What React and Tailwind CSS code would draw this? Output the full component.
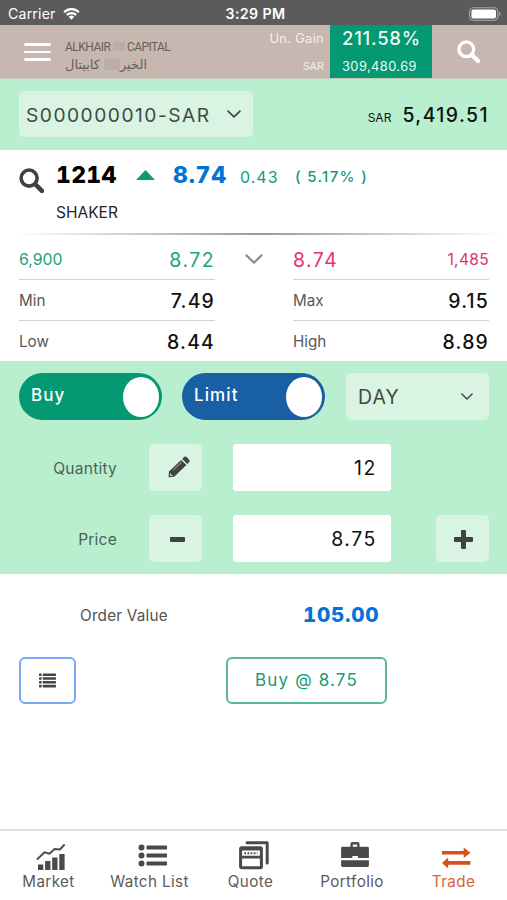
const QUOTES_LEFT = [
  { label: 'Min', value: '7.49' },
  { label: 'Low', value: '8.44' },
]

const QUOTES_RIGHT = [
  { label: 'Max', value: '9.15' },
  { label: 'High', value: '8.89' },
]

function SearchIcon({ className }) {
  return (
    <svg className={className} viewBox="0 0 24 24" fill="none" stroke="currentColor">
      <circle cx="9.7" cy="9.7" r="7.7" strokeWidth="3.4" />
      <path d="M15.6 15.6L22 22" strokeWidth="4.4" strokeLinecap="round" />
    </svg>
  )
}

function ChevronIcon({ className }) {
  return (
    <svg className={className} viewBox="0 0 16 9" fill="none" stroke="currentColor">
      <path d="M1.2 1.2L8 7.8L14.8 1.2" strokeWidth="2" strokeLinecap="round" strokeLinejoin="round" />
    </svg>
  )
}

function StatusBar() {
  return (
    <div className="h-[25px] shrink-0 bg-[#5b5b5b] text-white grid grid-cols-3 items-center pt-[3px] pl-[8px] pr-[6px]">
      <div className="flex items-center gap-[7px]">
        <span className="text-[14.2px] leading-none tracking-[0.15px]">Carrier</span>
        <svg className="w-[17px] h-[12px]" viewBox="0 0 18 13" fill="none" stroke="currentColor" strokeWidth="2.4">
          <path d="M1 4.6a11.3 11.3 0 0 1 16 0" />
          <path d="M3.9 7.6a7.2 7.2 0 0 1 10.2 0" />
          <path d="M9 12.6l-3-3a4.2 4.2 0 0 1 6 0z" fill="currentColor" stroke="none" />
        </svg>
      </div>
      <span className="pl-[2px] text-center text-[14.2px] font-semibold leading-none tracking-[0.4px]">3:29 PM</span>
      <svg className="w-[32px] h-[14px] justify-self-end" viewBox="0 0 32 14">
        <rect x="0.6" y="0.8" width="28.2" height="12.4" rx="3.6" fill="none" stroke="#a8a8a8" strokeWidth="1.1" />
        <rect x="2.4" y="2.5" width="24.6" height="9" rx="2" fill="white" />
        <path d="M30.2 4.8a2.4 2.4 0 0 1 0 4.4z" fill="#a8a8a8" />
      </svg>
    </div>
  )
}

function Header() {
  return (
    <header className="h-[54px] shrink-0 bg-[#c6b8b0] flex border-b border-[#c3c7b6]">
      <button className="ml-[24px] mt-[18px] w-[27px] h-[18px] flex flex-col justify-between" aria-label="Menu">
        <span className="w-full h-[2.6px] rounded-full bg-white" />
        <span className="w-full h-[2.6px] rounded-full bg-white" />
        <span className="w-full h-[2.6px] rounded-full bg-white" />
      </button>

      <div className="ml-[14px] mt-[14px] w-[120px] text-[#6c5c58]">
        <div className="flex items-center h-[15px] font-[Roboto,sans-serif] text-[12px] leading-none">
          <span className="w-[48px] whitespace-nowrap tracking-[-0.5px]">ALKHAIR</span>
          <span className="w-[12px] h-[9px] bg-[#b9aea8]" />
          <span className="ml-[2px] whitespace-nowrap tracking-[-0.6px]">CAPITAL</span>
        </div>
        <div className="flex items-center h-[20px] font-['DejaVu_Sans',sans-serif] text-[13px] leading-none">
          <span className="w-[35px] whitespace-nowrap" dir="rtl">كابيتال</span>
          <span className="ml-[4px] w-[16px] h-[11px] bg-[#b9aea8]" />
          <span className="ml-[1px] w-[26px]" dir="rtl">الخير</span>
        </div>
      </div>

      <div className="flex-1 flex flex-col items-end pr-[6px] text-[#f4eeeb]">
        <span className="mt-[7px] text-[12.8px] leading-[14px] tracking-[0.35px]">Un. Gain</span>
        <span className="mt-[15px] text-[10.8px] leading-[11px]">SAR</span>
      </div>

      <div className="w-[102px] h-[53px] bg-[#049973] text-[#e9fbf4] flex flex-col pl-[12px]">
        <span className="mt-[3px] text-[18.5px] leading-[20px] tracking-[0.75px] font-medium">211.58%</span>
        <span className="mt-[11px] text-[12.8px] leading-[16px] tracking-[0.45px]">309,480.69</span>
      </div>

      <div className="w-[75px] pl-[25px] pt-[15px]">
        <SearchIcon className="w-[23px] h-[23px] text-white" />
      </div>
    </header>
  )
}

function AccountBar() {
  return (
    <div className="h-[71px] shrink-0 bg-[#b9efcf] flex justify-between pl-[19px] pr-[18px] pt-[12px]">
      <button className="w-[234px] h-[46px] rounded-[5px] bg-[#d9f4e2] text-[#3f4a43] flex items-center justify-between pl-[7px] pr-[12px]">
        <span className="pt-[4px] text-[19.2px] leading-none tracking-[1.5px]">S000000010-SAR</span>
        <ChevronIcon className="w-[14px] h-[8px]" />
      </button>
      <div className="flex items-baseline gap-[11px] pt-[15px] text-[#0c120e]">
        <span className="text-[12px] leading-none">SAR</span>
        <span className="text-[19.4px] leading-none tracking-[1.45px] font-medium">5,419.51</span>
      </div>
    </div>
  )
}

function Symbol() {
  return (
    <section className="h-[83px] shrink-0 pl-[19px] flex flex-col">
      <div className="flex">
        <SearchIcon className="mt-[18px] w-[25px] h-[25px] text-[#404040]" />
        <div className="ml-[12px] mt-[13px]">
          <div className="flex items-center h-[24px] leading-none">
            <span className="w-[80px] text-[23px] font-extrabold tracking-[0.3px] tabular-nums text-black">1214</span>
            <svg className="w-[19px] h-[10px]" viewBox="0 0 19 10">
              <path d="M9.5 0L19 10H0z" fill="#0c9a73" />
            </svg>
            <span className="ml-[18px] w-[67px] text-[23px] font-extrabold tracking-[0.8px] tabular-nums text-[#0473d6]">8.74</span>
            <span className="w-[55px] pt-[3px] text-[16px] tracking-[1px] text-[#129c75]">0.43</span>
            <span className="pt-[3px] text-[15px] tracking-[1.35px] font-medium whitespace-pre text-[#129c75]">( 5.17% )</span>
          </div>
          <p className="mt-[18px] text-[15.5px] leading-[16px] text-[#262626]">SHAKER</p>
        </div>
      </div>
    </section>
  )
}

function QuoteRow({ label, value }) {
  return (
    <div className="h-[41px] flex items-center justify-between border-t border-[#d2d2d2]">
      <span className="pt-[1px] text-[15.2px] leading-none text-[#585858]">{label}</span>
      <span className="pt-[3px] text-[19.4px] leading-none font-medium tracking-[1.2px] text-[#111111]">{value}</span>
    </div>
  )
}

function Quotes() {
  return (
    <section className="h-[128px] shrink-0 pl-[19px] pr-[18px]">
      <div className="-ml-[3px] -mr-[14px] h-[2px] bg-linear-to-r from-white via-[#9a9a9a] to-white" />
      <div className="grid grid-cols-[196px_1fr_196px] pt-[4px]">
        <div>
          <div className="h-[40px] pt-[1px] flex items-center justify-between leading-none text-[#1aa27b]">
            <span className="text-[15.8px]">6,900</span>
            <span className="pt-[2px] text-[19.4px] tracking-[1.5px]">8.72</span>
          </div>
          {QUOTES_LEFT.map((row) => (
            <QuoteRow key={row.label} {...row} />
          ))}
        </div>
        <div className="flex justify-center pt-[15px]">
          <ChevronIcon className="w-[18px] h-[10px] text-[#8f8f8f]" />
        </div>
        <div>
          <div className="h-[40px] pt-[1px] flex items-center justify-between leading-none text-[#e0356b]">
            <span className="pt-[2px] text-[19.4px] tracking-[1.5px]">8.74</span>
            <span className="text-[15.6px] tracking-[0.3px]">1,485</span>
          </div>
          {QUOTES_RIGHT.map((row) => (
            <QuoteRow key={row.label} {...row} />
          ))}
        </div>
      </div>
    </section>
  )
}

function Toggle({ label, className }) {
  return (
    <button
      role="switch"
      aria-checked="true"
      className={`w-[143px] h-[47px] rounded-full flex items-center justify-between pl-[12px] pr-[3px] text-white ${className}`}
    >
      <span className="pb-[3px] text-[17px] leading-none font-medium tracking-[1.1px]">{label}</span>
      <span className="w-[36px] h-[40px] rounded-[50%] bg-white" />
    </button>
  )
}

function OrderForm() {
  return (
    <section className="h-[213px] shrink-0 bg-[#b9efcf] pl-[19px] pr-[18px] pt-[12px]">
      <div className="flex">
        <Toggle label="Buy" className="bg-[#049973]" />
        <Toggle label="Limit" className="ml-[20px] bg-[#185fa3]" />
        <button className="ml-auto w-[143px] h-[47px] rounded-[5px] bg-[#d9f4e2] text-[#3f4a43] flex items-center justify-between pl-[12px] pr-[16px]">
          <span className="pt-[2px] text-[19.4px] leading-none tracking-[1.1px]">DAY</span>
          <ChevronIcon className="w-[12px] h-[7px]" />
        </button>
      </div>

      <div className="mt-[24px] flex items-center">
        <span className="w-[98px] pt-[2px] text-right text-[15.6px] leading-none tracking-[0.2px] text-[#4c6355]">Quantity</span>
        <button className="ml-[32px] w-[53px] h-[47px] rounded-[5px] bg-[#d9f4e2] flex items-center justify-center pl-[6px] pb-[2px]" aria-label="Edit quantity">
          <svg className="w-[22px] h-[22px] text-[#404340]" viewBox="0 0 22 22" fill="currentColor">
            <path d="M0.6 21.2L1 15.6L13.2 3.9L18.4 9L6.2 20.8z" />
            <path d="M14.2 2.9L16 1.1q1.3-1.1 2.6 0l2.4 2.5q1.2 1.3 0 2.6L19.3 8z" />
            <path d="M2.1 17.2L3.1 18.1 3.2 19 4.6 19.2 5.1 19.8 2.2 20z" fill="#d9f4e2" />
            <path d="M5.2 14.2L13.4 6.3" stroke="#b9c4bc" strokeWidth="0.9" />
          </svg>
        </button>
        <div className="ml-[31px] w-[158px] h-[47px] rounded-[3px] bg-white flex items-center justify-end pr-[14px]">
          <span className="pt-[2px] text-[19.4px] leading-none tracking-[1.6px] text-[#111111]">12</span>
        </div>
      </div>

      <div className="mt-[24px] flex items-center">
        <span className="w-[98px] pt-[2px] text-right text-[15.6px] leading-none tracking-[0.2px] text-[#4c6355]">Price</span>
        <button className="ml-[32px] w-[53px] h-[47px] rounded-[5px] bg-[#d9f4e2] flex items-center justify-center pl-[4px] pt-[1px]" aria-label="Decrease price">
          <span className="w-[15px] h-[5px] rounded-[1px] bg-[#404340]" />
        </button>
        <div className="ml-[31px] w-[158px] h-[47px] rounded-[3px] bg-white flex items-center justify-end pr-[14px]">
          <span className="pt-[2px] text-[19.4px] leading-none tracking-[1.6px] text-[#111111]">8.75</span>
        </div>
        <button className="ml-auto w-[53px] h-[47px] rounded-[5px] bg-[#d9f4e2] flex items-center justify-center pl-[2px] pt-[1px]" aria-label="Increase price">
          <svg className="w-[19px] h-[19px] text-[#404340]" viewBox="0 0 19 19" fill="currentColor">
            <rect x="0" y="7" width="19" height="5" rx="1" />
            <rect x="7" y="0" width="5" height="19" rx="1" />
          </svg>
        </button>
      </div>
    </section>
  )
}

function OrderSummary() {
  return (
    <section className="flex-1 px-[19px] pt-[29px]">
      <div className="flex items-center h-[24px] pl-[61px] leading-none">
        <span className="w-[223px] pt-[2px] text-[15.3px] tracking-[0.2px] text-[#525252]">Order Value</span>
        <span className="text-[20.6px] font-extrabold tracking-[0.7px] tabular-nums text-[#0473d6]">105.00</span>
      </div>
      <div className="flex mt-[30px]">
        <button className="w-[57px] h-[47px] rounded-[6px] border-2 border-[#7da6f6] flex items-center justify-center" aria-label="Orders">
          <svg className="w-[17px] h-[15px]" viewBox="0 0 18 15" fill="#454545">
            {[0, 4, 8, 12].map((y) => (
              <g key={y}>
                <rect x="0" y={y} width="2.8" height="2.8" rx="0.5" />
                <rect x="4" y={y} width="14" height="2.8" rx="0.5" />
              </g>
            ))}
          </svg>
        </button>
        <button className="ml-[150px] w-[161px] h-[47px] rounded-[6px] border-2 border-[#57b899] text-[17px] leading-none tracking-[1.15px] text-[#189c76]">
          Buy @ 8.75
        </button>
      </div>
    </section>
  )
}

function MarketIcon() {
  return (
    <svg className="w-[30px] h-[27px]" viewBox="0 0 30 27" fill="currentColor">
      <path d="M1 16.5L8.5 9.3L13.5 10.6L18.5 6L24 6.4L28.6 1.5" fill="none" stroke="currentColor" strokeWidth="1.9" />
      <path d="M2 21.5h5.3V27H2zM9.1 18h5.3v9H9.1zM16.2 14.4h5.3V27h-5.3zM23.3 11h5.3v16h-5.3z" />
    </svg>
  )
}

function WatchListIcon() {
  return (
    <svg className="w-[30px] h-[27px]" viewBox="0 0 30 27" fill="currentColor">
      {[4.5, 12.5, 20.5].map((y) => (
        <g key={y}>
          <circle cx="3.5" cy={y} r="3" />
          <rect x="8.5" y={y - 1.9} width="20.5" height="3.8" rx="0.6" />
        </g>
      ))}
    </svg>
  )
}

function QuoteIcon() {
  return (
    <svg className="w-[30px] h-[29px]" viewBox="0 0 30 29" fill="none" stroke="currentColor">
      <path d="M8 1.7H28.2V22" strokeWidth="3" strokeLinejoin="round" strokeLinecap="round" />
      <rect x="1.6" y="6.8" width="20.8" height="20" rx="1" strokeWidth="3" />
      <path d="M1.6 8h20.8M1.6 16.2h20.8" strokeWidth="2.8" />
      <path d="M5.4 12.2h13" strokeWidth="2" strokeDasharray="1.7 1.4" />
    </svg>
  )
}

function PortfolioIcon() {
  return (
    <svg className="w-[30px] h-[29px]" viewBox="0 0 30 29" fill="currentColor">
      <path d="M11.6 6V3.2q0-1 1-1h4.8q1 0 1 1V6" fill="none" stroke="currentColor" strokeWidth="2.4" />
      <path d="M2.5 5.8h25q1.4 0 1.4 1.4v9.8H18v-1.9h-5.7V17H1.1V7.2q0-1.4 1.4-1.4z" />
      <path d="M1.1 19.3h27.8v5.2q0 1.4-1.4 1.4h-25q-1.4 0-1.4-1.4z" />
    </svg>
  )
}

function TradeIcon() {
  return (
    <svg className="w-[30px] h-[22px]" viewBox="0 0 30 22" fill="currentColor">
      <path d="M1 4h21.7V0.4L29.4 5.8L22.7 11V7.6H1z" />
      <path d="M29.4 14H7.2V10.6L1 16L7.2 21.4V17.7h22.2z" />
    </svg>
  )
}

const TABS = [
  { label: 'Market', Icon: MarketIcon, pad: 'pl-[5px]' },
  { label: 'Watch List', Icon: WatchListIcon, pad: 'pl-[6px]' },
  { label: 'Quote', Icon: QuoteIcon, pad: 'pl-[7px]' },
  { label: 'Portfolio', Icon: PortfolioIcon, pad: 'pl-[6px]' },
  { label: 'Trade', Icon: TradeIcon, pad: 'pl-[5px] pb-[1px]', active: true },
]

function TabBar() {
  return (
    <nav className="h-[71px] shrink-0 border-t-2 border-[#dfdfdf] grid grid-cols-[97px_105px_97px_106px_97px]">
      {TABS.map(({ label, Icon, pad, active }) => (
        <a
          key={label}
          className={`flex flex-col items-center ${active ? 'text-[#d4501c]' : 'text-[#4a4a4a]'}`}
        >
          <span className={`h-[39px] flex items-end ${pad}`}>
            <Icon />
          </span>
          <span className="mt-[4px] text-[15.2px] leading-[16px] tracking-[0.4px] opacity-90 whitespace-nowrap">{label}</span>
        </a>
      ))}
    </nav>
  )
}

export default function App() {
  return (
    <div className="w-[507px] h-[900px] overflow-hidden bg-white flex flex-col font-[Inter,sans-serif]">
      <StatusBar />
      <Header />
      <AccountBar />
      <Symbol />
      <Quotes />
      <OrderForm />
      <OrderSummary />
      <TabBar />
    </div>
  )
}
